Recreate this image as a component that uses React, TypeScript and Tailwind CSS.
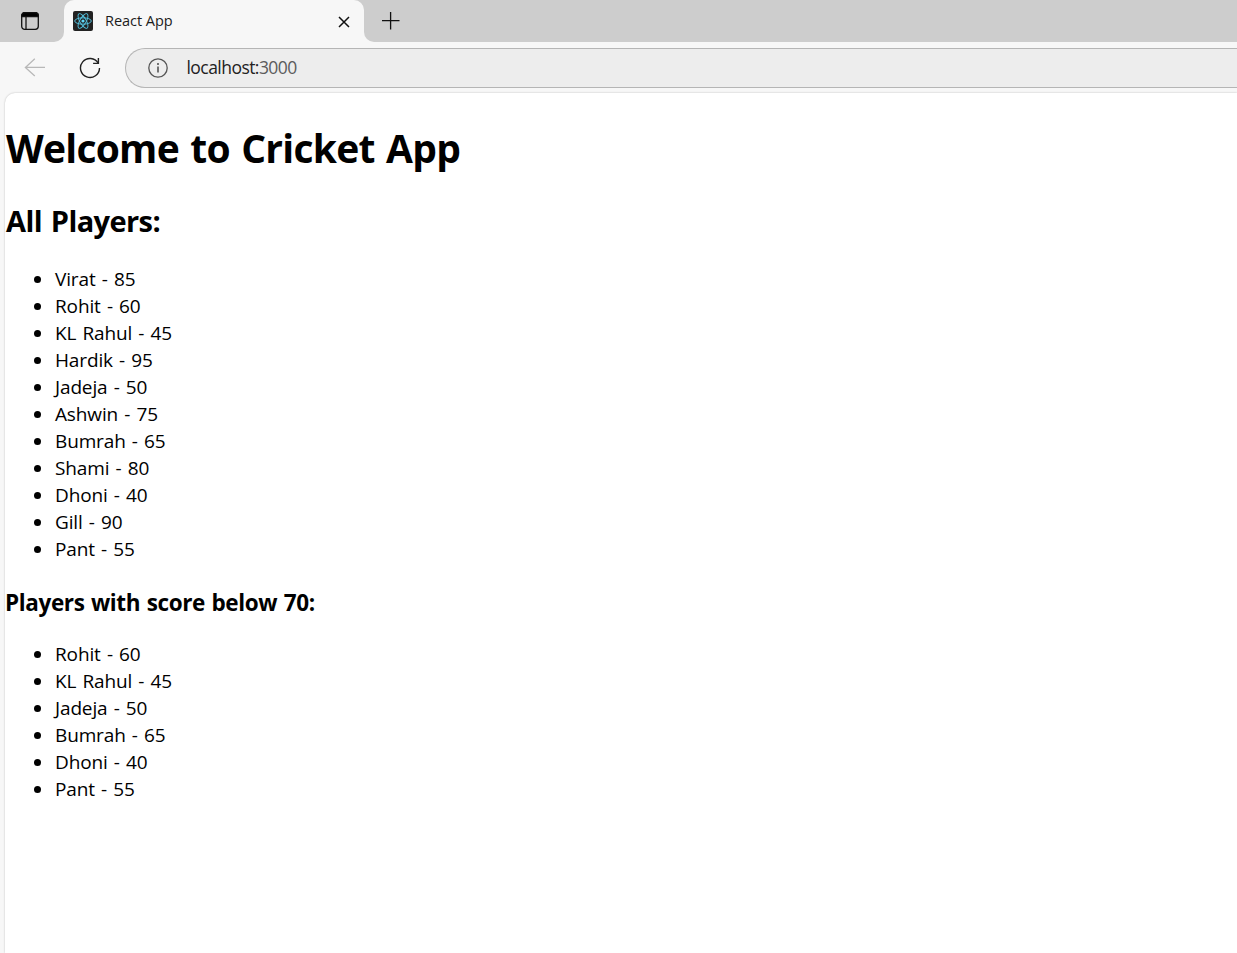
type Player = { name: string; score: number };

const players: Player[] = [
  { name: "Virat", score: 85 },
  { name: "Rohit", score: 60 },
  { name: "KL Rahul", score: 45 },
  { name: "Hardik", score: 95 },
  { name: "Jadeja", score: 50 },
  { name: "Ashwin", score: 75 },
  { name: "Bumrah", score: 65 },
  { name: "Shami", score: 80 },
  { name: "Dhoni", score: 40 },
  { name: "Gill", score: 90 },
  { name: "Pant", score: 55 },
];

function ReactLogo() {
  return (
    <svg width="20" height="20" viewBox="0 0 20 20" fill="none" stroke="#53c1de" strokeWidth="0.95">
      <rect width="20" height="20" rx="2" fill="#222" stroke="none" />
      <ellipse cx="10" cy="10" rx="8.3" ry="3.2" />
      <ellipse cx="10" cy="10" rx="8.3" ry="3.2" transform="rotate(60 10 10)" />
      <ellipse cx="10" cy="10" rx="8.3" ry="3.2" transform="rotate(120 10 10)" />
      <circle cx="10" cy="10" r="1.6" fill="#61dafb" stroke="none" />
    </svg>
  );
}

function TabStrip() {
  return (
    <div className="flex h-[42px]">
      <div className="w-16 rounded-br-[10px] bg-[#cdcdcd] pt-3 pl-[21px]">
        <svg width="18" height="18" viewBox="0 0 18 18" fill="none" stroke="#111" strokeWidth="1.3">
          <rect x="0.7" y="0.9" width="16.6" height="16.4" rx="3" />
          <path d="M0.7 4.6V3.5a3 3 0 0 1 3-3h10.6a3 3 0 0 1 3 3v1.1z" fill="#000" />
          <path d="M5 5v12.2" />
        </svg>
      </div>
      <div className="w-[300px] bg-[#cdcdcd]">
        <div className="flex h-full items-center rounded-t-[10px] bg-[#f7f7f7] pl-[9px]">
          <ReactLogo />
          <span className="ml-3 w-[233px] text-[14.5px] tracking-[-0.03px] text-[#1b1b1b]">React App</span>
          <svg className="mt-px" width="12" height="12" viewBox="0 0 12 12" fill="none" stroke="#111" strokeWidth="1.5">
            <path d="M1 1l10 10M11 1l-10 10" />
          </svg>
        </div>
      </div>
      <div className="flex-1 rounded-bl-[10px] bg-[#cdcdcd] pt-3 pl-[18px]">
        <svg width="18" height="18" viewBox="0 0 18 18" fill="none" stroke="#111" strokeWidth="1.3">
          <path d="M0 8.6h17.5M8.6 0v17.5" />
        </svg>
      </div>
    </div>
  );
}

function Toolbar() {
  return (
    <div className="flex h-[51px] items-start pt-1.5">
      <svg className="mt-[9px] ml-6" width="22" height="20" viewBox="0 0 22 20" fill="none" stroke="#b8b8b8" strokeWidth="1.3">
        <path d="M21 10.4H1.5M10.8 1.8L1.4 10.4l9.4 8.6" />
      </svg>
      <svg className="mt-[9px] ml-[33px]" width="22" height="22" viewBox="0 0 22 22" fill="none" stroke="#222" strokeWidth="1.4">
        <path d="M19.2 6.2A9.5 9.5 0 1 0 20.5 11" />
        <path d="M19.4 1v5.4h-5.3" />
      </svg>
      <div className="ml-6 flex h-10 flex-1 items-center rounded-l-full border border-r-0 border-[#b5b5b5] bg-[#ededed] pl-[22px]">
        <svg width="20" height="20" viewBox="0 0 20 20" fill="none" stroke="#555" strokeWidth="1.3">
          <circle cx="10" cy="10" r="9.2" />
          <path d="M10 8.6v6M10 5v1.9" strokeWidth="1.6" />
        </svg>
        <span className="mb-0.5 ml-[18.5px] text-[17.5px] leading-6 tracking-[-0.55px] text-[#222]">
          localhost:<span className="text-[#5c5c5c]">3000</span>
        </span>
      </div>
    </div>
  );
}

function PlayerList({ items }: { items: Player[] }) {
  return (
    <ul className="pl-[29px] text-[19px] leading-[27px] tracking-[-0.14px] [word-spacing:1.4px]">
      {items.map((p) => (
        <li key={p.name} className="flex items-center">
          <span className="mr-3.5 size-[7px] rounded-full bg-black" />
          <span>
            {p.name} - {p.score}
          </span>
        </li>
      ))}
    </ul>
  );
}

export default function App() {
  return (
    <div className="flex h-[953px] w-[1237px] flex-col overflow-hidden bg-[#f7f7f7] font-['Open_Sans','Noto_Sans',sans-serif] text-black">
      <TabStrip />
      <Toolbar />
      <main className="ml-[5px] flex-1 rounded-tl-[10px] bg-white shadow-[0_0_2px_rgba(0,0,0,0.25)]">
        <h1 className="pt-7 pl-px text-[39px] leading-[54px] font-bold tracking-[-0.75px] [word-spacing:2px]">Welcome to Cricket App</h1>
        <h2 className="mt-[26px] pl-px text-[29px] leading-10 font-bold tracking-[-0.6px] [word-spacing:2px]">All Players:</h2>
        <div className="mt-[25px]">
          <PlayerList items={players} />
        </div>
        <h3 className="mt-6 text-[22.5px] leading-8 font-bold tracking-[-0.37px] [word-spacing:1px]">Players with score below 70:</h3>
        <div className="mt-[22px]">
          <PlayerList items={players.filter((p) => p.score < 70)} />
        </div>
      </main>
    </div>
  );
}
